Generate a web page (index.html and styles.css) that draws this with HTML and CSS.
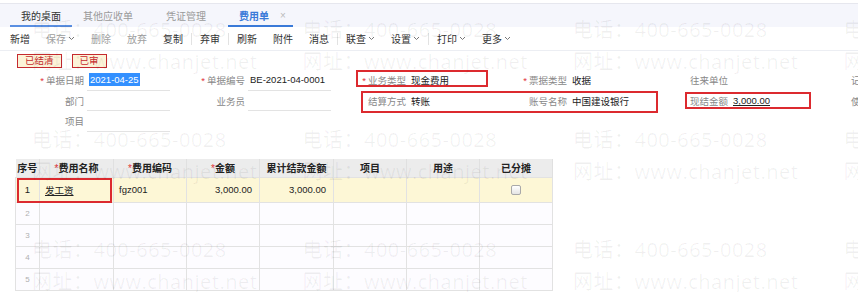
FILE: index.html
```html
<!DOCTYPE html>
<html>
  <head>
    <meta charset="utf-8">
    <meta name="viewport" content="width=device-width, initial-scale=1">
    <title>费用单</title>
    <link rel="stylesheet" href="styles.css">
  </head>
  <body>
    <div class="page">
      <nav class="tabs">
        <a class="tab home">我的桌面</a>
        <div class="tab-list">
          <a class="tab muted">其他应收单</a>
          <a class="tab muted">凭证管理</a>
          <a class="tab current">费用单<span class="close">×</span></a>
        </div>
      </nav>

      <div class="toolbar">
        <button>新增</button>
        <button disabled>保存<svg class="caret" viewBox="0 0 7 5"><polyline points="1,1 3.5,3.5 6,1"/></svg></button>
        <button disabled>删除</button>
        <button disabled>放弃</button>
        <button>复制</button>
        <span class="sep"></span>
        <button>弃审</button>
        <span class="sep"></span>
        <button>刷新</button>
        <button>附件</button>
        <button>消息</button>
        <span class="sep"></span>
        <button>联查<svg class="caret" viewBox="0 0 7 5"><polyline points="1,1 3.5,3.5 6,1"/></svg></button>
        <button>设置<svg class="caret" viewBox="0 0 7 5"><polyline points="1,1 3.5,3.5 6,1"/></svg></button>
        <span class="sep"></span>
        <button>打印<svg class="caret" viewBox="0 0 7 5"><polyline points="1,1 3.5,3.5 6,1"/></svg></button>
        <button>更多<svg class="caret" viewBox="0 0 7 5"><polyline points="1,1 3.5,3.5 6,1"/></svg></button>
      </div>

      <div class="stamps">
        <span class="stamp">已结清</span>
        <span class="stamp">已审</span>
      </div>

      <div class="form">
        <div class="field"><label class="req">单据日期</label><span class="value input"><span class="selected">2021-04-25</span></span></div>
        <div class="field"><label class="req">单据编号</label><span class="value input">BE-2021-04-0001</span></div>
        <div class="field"><label class="req">业务类型</label><span class="value">现金费用</span></div>
        <div class="field"><label class="req">票据类型</label><span class="value">收据</span></div>
        <div class="field"><label>往来单位</label><span class="value"></span></div>
        <div class="field"><label>记账日期</label><span class="value"></span></div>

        <div class="field"><label>部门</label><span class="value input"></span></div>
        <div class="field"><label>业务员</label><span class="value input"></span></div>
        <div class="field"><label>结算方式</label><span class="value">转账</span></div>
        <div class="field"><label>账号名称</label><span class="value">中国建设银行</span></div>
        <div class="field"><label>现结金额</label><span class="value"><u>3,000.00</u></span></div>
        <div class="field"><label>使用部门</label><span class="value"></span></div>

        <div class="field"><label>项目</label><span class="value input"></span></div>
      </div>

      <table class="grid">
        <colgroup>
          <col class="c-seq"><col class="c-w74"><col class="c-w73"><col class="c-w73">
          <col class="c-w74"><col class="c-w73"><col class="c-w73"><col class="c-w73">
        </colgroup>
        <thead>
          <tr>
            <th>序号</th>
            <th><span class="star">*</span>费用名称</th>
            <th><span class="star">*</span>费用编码</th>
            <th><span class="star">*</span>金额</th>
            <th>累计结款金额</th>
            <th>项目</th>
            <th>用途</th>
            <th>已分摊</th>
          </tr>
        </thead>
        <tbody>
          <tr class="active">
            <td class="num">1</td>
            <td><span class="link">发工资</span></td>
            <td>fgz001</td>
            <td class="amt">3,000.00</td>
            <td class="amt">3,000.00</td>
            <td></td>
            <td></td>
            <td class="center"><span class="check"></span></td>
          </tr>
          <tr><td class="num">2</td><td></td><td></td><td></td><td></td><td></td><td></td><td></td></tr>
          <tr><td class="num">3</td><td></td><td></td><td></td><td></td><td></td><td></td><td></td></tr>
          <tr><td class="num">4</td><td></td><td></td><td></td><td></td><td></td><td></td><td></td></tr>
          <tr><td class="num">5</td><td></td><td></td><td></td><td></td><td></td><td></td><td></td></tr>
        </tbody>
      </table>

      <!-- annotation boxes drawn over the form -->
      <div class="mark mark-type"></div>
      <div class="mark mark-settle"></div>
      <div class="mark mark-cash"></div>
      <div class="mark mark-item"></div>

      <div class="watermark">
        <div class="wm"><span>电话：400-665-0028</span><span>网址：www.chanjet.net</span></div>
        <div class="wm"><span>电话：400-665-0028</span><span>网址：www.chanjet.net</span></div>
        <div class="wm"><span>电话：400-665-0028</span><span>网址：www.chanjet.net</span></div>
        <div class="wm"><span>电话：400-665-0028</span><span>网址：www.chanjet.net</span></div>
        <div class="wm"><span>电话：400-665-0028</span><span>网址：www.chanjet.net</span></div>
        <div class="wm"><span>电话：400-665-0028</span><span>网址：www.chanjet.net</span></div>
        <div class="wm"><span>电话：400-665-0028</span><span>网址：www.chanjet.net</span></div>
        <div class="wm"><span>电话：400-665-0028</span><span>网址：www.chanjet.net</span></div>
        <div class="wm"><span>电话：400-665-0028</span><span>网址：www.chanjet.net</span></div>
        <div class="wm"><span>电话：400-665-0028</span><span>网址：www.chanjet.net</span></div>
        <div class="wm"><span>电话：400-665-0028</span><span>网址：www.chanjet.net</span></div>
        <div class="wm"><span>电话：400-665-0028</span><span>网址：www.chanjet.net</span></div>
      </div>
    </div>
  </body>
</html>
```

FILE: styles.css
```css
body {
  margin: 0;
  overflow: hidden;
  background: #fff;
  color: #333;
  font-family: "Liberation Sans", "Noto Sans CJK SC", sans-serif;
}

.page {
  position: relative;
  width: 858px;
  height: 292px;
  overflow: hidden;
}

/* tabs */
.tabs {
  display: flex;
  height: 24px;
  margin-top: 3px;
  padding-left: 10px;
  box-sizing: border-box;
  border-top: 1px solid #e6e7ee;
  background: #f5f6fc;
  font-size: 10px;
}

.tab-list {
  display: flex;
  gap: 11px;
}

.tab {
  display: flex;
  align-items: center;
  padding: 2px 11px 0;
  border-bottom: 2px solid transparent;
  color: #333;
  white-space: nowrap;
}

.tab.home {
  border-bottom-color: #5a8fe2;
}

.tab.muted {
  color: #9a9a9a;
}

.tab.current {
  padding-right: 7px;
  color: #3a7ad8;
  font-weight: bold;
  border-bottom-color: #3a7ad8;
}

.close {
  margin-left: 11px;
  color: #bbb;
  font-weight: normal;
  font-size: 10px;
}

/* toolbar */
.toolbar {
  display: flex;
  align-items: center;
  height: 23px;
  padding-left: 2px;
  border-bottom: 1px solid #eceef3;
  font-size: 10px;
}

.toolbar button {
  display: flex;
  align-items: center;
  gap: 2px;
  padding: 0 8px;
  border: 0;
  background: none;
  color: #333;
  font: inherit;
}

.toolbar button:disabled {
  color: #a0a0a0;
}

.caret {
  width: 7px;
  height: 5px;
  fill: none;
  stroke: #777;
  stroke-width: 1;
}

.sep {
  width: 1px;
  height: 12px;
  background: #e2e2e2;
}

/* status stamps */
.stamps {
  display: flex;
  gap: 10px;
  margin-top: 3px;
  padding-left: 17px;
}

.stamp {
  height: 14px;
  box-sizing: border-box;
  padding: 0 7px;
  border: 1px solid #c62a2f;
  background: #fcf3d8;
  color: #c62a2f;
  font-size: 9.5px;
  line-height: 12px;
}

/* header form */
.form {
  display: grid;
  grid-template-columns: repeat(6, 161px);
  grid-auto-rows: 20.5px;
  margin-top: 2px;
  padding-left: 9px;
  font-size: 9.5px;
}

.field {
  display: flex;
  align-items: center;
  white-space: nowrap;
}

.field label {
  flex: none;
  width: 75px;
  text-align: right;
  color: #888;
}

.field label.req::before {
  content: "*";
  margin-right: 2px;
  color: #e2343a;
}

.value {
  display: flex;
  align-items: center;
  align-self: stretch;
  width: 83px;
  margin-left: 3px;
  padding-left: 2px;
  box-sizing: border-box;
  color: #222;
}

.value.input {
  border-bottom: 1px solid #e3e3e3;
}

.selected {
  padding: 1px 1px;
  background: #3390ff;
  color: #fff;
}

/* detail grid */
.grid {
  margin: 27px 0 0 15px;
  width: 537px;
  border-collapse: collapse;
  table-layout: fixed;
  font-size: 9.5px;
}

.c-seq { width: 24px; }
.c-w74 { width: 74px; }
.c-w73 { width: 73px; }

.grid th {
  height: 18px;
  padding: 0;
  background: #ececec;
  border-right: 1px solid #e0e0e0;
  color: #222;
  font-size: 10px;
  font-weight: bold;
  white-space: nowrap;
}

.star {
  color: #e2343a;
  font-weight: normal;
}

.grid td {
  height: 21px;
  padding: 0 5px;
  border: 1px solid #e2e2e2;
  background: #fdfcff;
  color: #222;
  white-space: nowrap;
}

.grid tr.active td {
  height: 24px;
  background: #fdf7d6;
}

.grid td.num {
  padding: 0;
  text-align: center;
  color: #b0b0b0;
  font-size: 8px;
}

.grid tr.active td.num {
  color: #222;
  font-size: 9.5px;
}

.grid td.amt {
  padding-right: 7px;
  text-align: right;
}

.grid td.center {
  text-align: center;
}

.link {
  text-decoration: underline;
}

.check {
  display: inline-block;
  width: 10px;
  height: 10px;
  box-sizing: border-box;
  border: 1px solid #a9a9a9;
  border-radius: 2px;
  background: linear-gradient(#fff, #e4e4e4);
  vertical-align: middle;
}

/* red annotation boxes */
.mark {
  position: absolute;
  box-sizing: border-box;
  border: 2px solid #dc2a2f;
}

.mark-type { left: 356px; top: 70px; width: 132px; height: 17px; }
.mark-settle { left: 361px; top: 91px; width: 297px; height: 22px; }
.mark-cash { left: 685px; top: 92px; width: 126px; height: 17px; }
.mark-item { left: 17px; top: 178px; width: 95px; height: 25px; }

/* watermark */
.watermark {
  position: absolute;
  top: 14px;
  left: 32px;
  display: grid;
  grid-template-columns: repeat(4, 270.5px);
  grid-auto-rows: 110px;
  pointer-events: none;
  font-family: "Open Sans", "Noto Sans CJK SC", sans-serif;
  font-size: 20px;
  letter-spacing: 0.5px;
  color: rgba(0, 0, 0, 0.06);
}

.wm span {
  display: block;
  line-height: 31.5px;
  white-space: nowrap;
}
```
